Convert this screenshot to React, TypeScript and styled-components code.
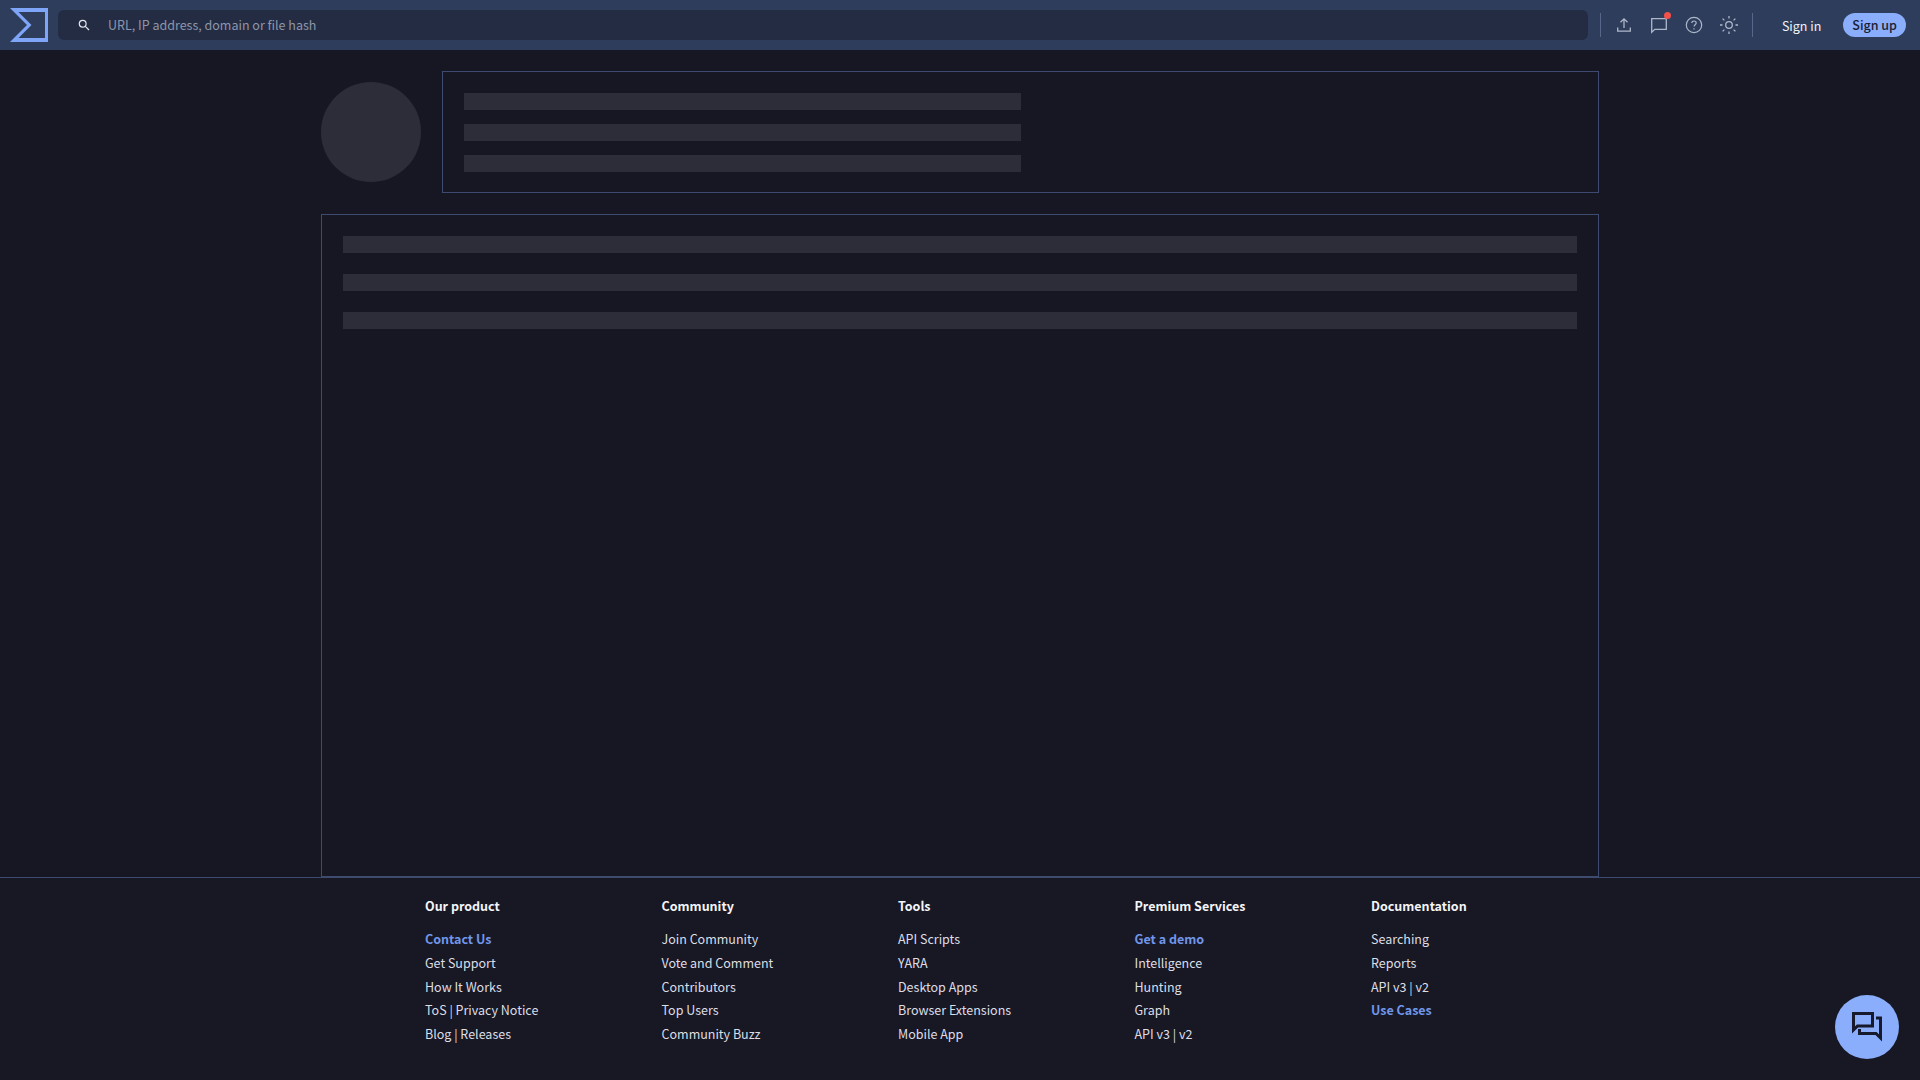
import styled, { createGlobalStyle } from 'styled-components';

const GlobalStyle = createGlobalStyle`
    html, body {
        margin: 0;
        padding: 0;
        height: 100%;
        background: #161723;
    }

    * {
        box-sizing: border-box;
    }

    body {
        font-family: 'Noto Sans CJK JP', 'Noto Sans', sans-serif;
        font-size: 12.5px;
        color: #e6e8ee;
    }
`;

const Page = styled.div`
    display: flex;
    flex-direction: column;
    height: 1080px;
    overflow: hidden;
`;

const TopBar = styled.header`
    display: flex;
    align-items: center;
    flex: none;
    height: 50px;
    padding: 0 14px 0 10px;
    background: #2e3d5b;
`;

const LogoLink = styled.a`
    display: flex;
    flex: none;
    width: 38px;
    height: 34px;
    margin-right: 10px;
`;

const SearchBox = styled.div`
    display: flex;
    align-items: center;
    flex: 1;
    height: 30px;
    padding-left: 20px;
    gap: 18px;
    border-radius: 6px;
    background: #242c43;
`;

const Placeholder = styled.span`
    color: #8d96aa;
    font-size: 12.5px;
    line-height: 30px;
`;

const Divider = styled.div<{ $first?: boolean }>`
    flex: none;
    width: 1px;
    height: 24px;
    margin-left: ${(p) => (p.$first ? '12px' : '0')};
    background: #56678a;
`;

const IconRow = styled.div`
    display: flex;
    align-items: center;
    gap: 11px;
    margin: 0 11px;
`;

const IconButton = styled.button`
    position: relative;
    display: flex;
    align-items: center;
    justify-content: center;
    width: 24px;
    height: 24px;
    padding: 0;
    border: 0;
    background: none;
    color: #aeb7ca;
`;

const Badge = styled.span`
    position: absolute;
    top: -1px;
    right: 0;
    width: 7px;
    height: 7px;
    border-radius: 50%;
    background: #f4504a;
`;

const SignIn = styled.a`
    margin-left: 29px;
    color: #f0f2f6;
    font-size: 12.5px;
    font-weight: 400;
`;

const SignUp = styled.a`
    margin-left: 22px;
    padding: 0 9px;
    height: 24px;
    border-radius: 12px;
    background: #8aaefc;
    color: #1a2033;
    font-size: 12.5px;
    font-weight: 500;
    line-height: 24px;
`;

const Main = styled.main`
    display: flex;
    flex-direction: column;
    flex: 1;
    gap: 21px;
    width: 1278px;
    margin: 0 auto;
    padding-top: 21px;
`;

const HeaderRow = styled.div`
    display: flex;
    align-items: center;
    gap: 21px;
`;

const Avatar = styled.div`
    flex: none;
    width: 100px;
    height: 100px;
    border-radius: 50%;
    background: #2d2d3a;
`;

const Card = styled.section<{ $gap: number; $bottom: number }>`
    display: flex;
    flex-direction: column;
    flex: 1 0 auto;
    gap: ${(p) => p.$gap}px;
    padding: 21px 21px ${(p) => p.$bottom}px;
    border: 1px solid #3d4b6f;
`;

const Bar = styled.div<{ $half?: boolean }>`
    width: ${(p) => (p.$half ? '50%' : '100%')};
    height: 17px;
    background: #2d2d3a;
`;

const Footer = styled.footer`
    display: grid;
    flex: none;
    grid-template-columns: repeat(5, 236.5px);
    height: 203px;
    padding: 16px 0 0 425px;
    border-top: 1px solid #3d4b6f;
    background: #181825;
`;

const FooterColumn = styled.div`
    display: flex;
    flex-direction: column;
`;

const ColumnTitle = styled.div`
    margin-bottom: 9px;
    color: #f4f5f8;
    font-size: 12.5px;
    font-weight: 700;
    line-height: 24px;
`;

const FooterLink = styled.a<{ $accent?: boolean }>`
    color: ${(p) => (p.$accent ? '#7096ea' : '#dcdee6')};
    font-size: 12.5px;
    font-weight: ${(p) => (p.$accent ? 700 : 400)};
    line-height: 23.75px;
`;

const ChatButton = styled.button`
    position: fixed;
    right: 21px;
    bottom: 21px;
    display: flex;
    align-items: center;
    justify-content: center;
    width: 64px;
    height: 64px;
    padding: 0;
    border: 0;
    border-radius: 50%;
    background: #8aaefc;
    color: #161a2c;
`;

const footerColumns = [
    {
        title: 'Our product',
        links: [
            { label: 'Contact Us', accent: true },
            { label: 'Get Support' },
            { label: 'How It Works' },
            { label: 'ToS | Privacy Notice' },
            { label: 'Blog | Releases' },
        ],
    },
    {
        title: 'Community',
        links: [
            { label: 'Join Community' },
            { label: 'Vote and Comment' },
            { label: 'Contributors' },
            { label: 'Top Users' },
            { label: 'Community Buzz' },
        ],
    },
    {
        title: 'Tools',
        links: [
            { label: 'API Scripts' },
            { label: 'YARA' },
            { label: 'Desktop Apps' },
            { label: 'Browser Extensions' },
            { label: 'Mobile App' },
        ],
    },
    {
        title: 'Premium Services',
        links: [
            { label: 'Get a demo', accent: true },
            { label: 'Intelligence' },
            { label: 'Hunting' },
            { label: 'Graph' },
            { label: 'API v3 | v2' },
        ],
    },
    {
        title: 'Documentation',
        links: [
            { label: 'Searching' },
            { label: 'Reports' },
            { label: 'API v3 | v2' },
            { label: 'Use Cases', accent: true },
        ],
    },
];

const Logo = () => (
    <svg width="38" height="34" viewBox="0 0 38 34">
        <path
            fill="#7fa5f8"
            fillRule="evenodd"
            d="M0 0H38V34H0L17 17ZM8.500 4 21.500 17 8.500 30H35V4Z"
        />
    </svg>
);

const SearchIcon = () => (
    <svg width="12" height="12" viewBox="0 0 12 12" fill="none" stroke="#e4e7ee" strokeWidth="1.200">
        <circle cx="4.700" cy="4.700" r="3.400" />
        <path d="M7.300 7.300 11 11" />
    </svg>
);

const UploadIcon = () => (
    <svg width="16" height="16" viewBox="0 0 16 16" fill="none" stroke="currentColor" strokeWidth="1.300">
        <path d="M8 11V2M4.500 5.300 8 1.800l3.500 3.500M1.700 10.500v3.700h12.600v-3.700" />
    </svg>
);

const CommentIcon = () => (
    <svg width="18" height="18" viewBox="0 0 18 18" fill="none" stroke="currentColor" strokeWidth="1.300">
        <path d="M1.700 2.700H16.300V13.300H4.800L1.700 16.300Z" />
    </svg>
);

const HelpIcon = () => (
    <svg width="18" height="18" viewBox="0 0 18 18" fill="none" stroke="currentColor" strokeWidth="1.200">
        <circle cx="9" cy="9" r="7.700" />
        <path d="M6.800 7.100C6.800 5.800 7.800 5 9 5s2.200.8 2.200 2c0 1.700-2.200 1.700-2.200 3.600" />
        <path d="M9 12.200v1.300" />
    </svg>
);

const SunIcon = () => (
    <svg width="20" height="20" viewBox="0 0 20 20" fill="none" stroke="currentColor" strokeWidth="1.300">
        <circle cx="10" cy="10" r="3.300" />
        <path d="M10 1v2.500M10 16.500V19M1 10h2.500M16.500 10H19M3.600 3.600l1.800 1.800M14.600 14.600l1.800 1.800M3.600 16.400l1.800-1.800M14.600 5.400l1.800-1.800" />
    </svg>
);

const ForumIcon = () => (
    <svg width="30" height="30" viewBox="0 0 30 30" fill="none" stroke="currentColor" strokeWidth="3">
        <path d="M1.500 1.500H20.500V14H5.500L1.500 18Z" />
        <path d="M24 6H28.500V26L24 21.500H7.500V17" />
    </svg>
);

export default function App() {
    return (
        <Page>
            <GlobalStyle />
            <TopBar>
                <LogoLink>
                    <Logo />
                </LogoLink>
                <SearchBox>
                    <SearchIcon />
                    <Placeholder>URL, IP address, domain or file hash</Placeholder>
                </SearchBox>
                <Divider $first />
                <IconRow>
                    <IconButton>
                        <UploadIcon />
                    </IconButton>
                    <IconButton>
                        <CommentIcon />
                        <Badge />
                    </IconButton>
                    <IconButton>
                        <HelpIcon />
                    </IconButton>
                    <IconButton>
                        <SunIcon />
                    </IconButton>
                </IconRow>
                <Divider />
                <SignIn>Sign in</SignIn>
                <SignUp>Sign up</SignUp>
            </TopBar>

            <Main>
                <HeaderRow>
                    <Avatar />
                    <Card $gap={14} $bottom={20}>
                        <Bar $half />
                        <Bar $half />
                        <Bar $half />
                    </Card>
                </HeaderRow>
                <Card $gap={21} $bottom={21}>
                    <Bar />
                    <Bar />
                    <Bar />
                </Card>
            </Main>

            <Footer>
                {footerColumns.map((column) => (
                    <FooterColumn key={column.title}>
                        <ColumnTitle>{column.title}</ColumnTitle>
                        {column.links.map((link) => (
                            <FooterLink key={link.label} $accent={link.accent}>
                                {link.label}
                            </FooterLink>
                        ))}
                    </FooterColumn>
                ))}
            </Footer>

            <ChatButton>
                <ForumIcon />
            </ChatButton>
        </Page>
    );
}
